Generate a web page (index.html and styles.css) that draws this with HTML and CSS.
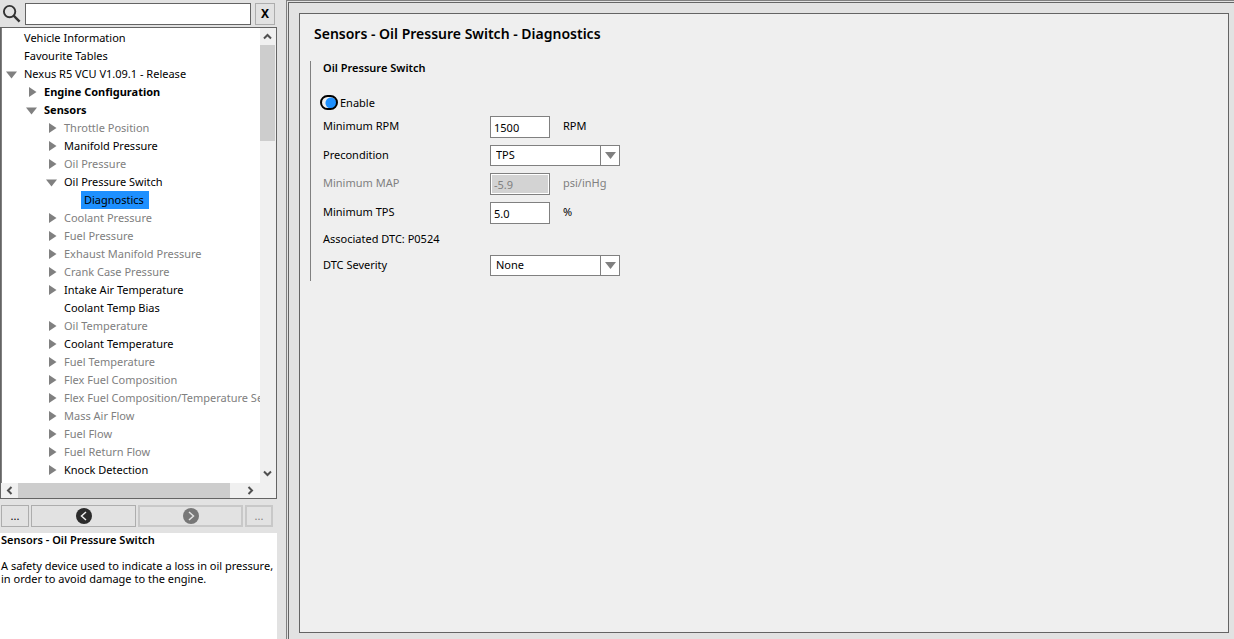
FILE: index.html
```html
<!DOCTYPE html>
<html lang="en">
<head>
<meta charset="utf-8">
<title>Sensors - Oil Pressure Switch - Diagnostics</title>
<link rel="stylesheet" href="styles.css">
</head>
<body>
<svg class="defs" aria-hidden="true">
  <symbol id="closed" viewBox="0 0 12 12"><path d="M3 1L10.500 6L3 11Z" fill="#808080"/></symbol>
  <symbol id="open" viewBox="0 0 12 12"><path d="M0 3.500H11L5.500 10.500Z" fill="#808080"/></symbol>
</svg>
<div class="app">
  <aside class="sidebar">
    <form class="search">
      <svg class="search-icon" viewBox="0 0 20 20" aria-hidden="true"><circle cx="8" cy="8" r="6" fill="none" stroke="#333" stroke-width="2"/><path d="M12 12L18.500 18.500" stroke="#333" stroke-width="2.500"/></svg>
      <input class="search-input" type="text" aria-label="Search">
      <button class="clear" type="button">X</button>
    </form>
    <div class="tree-frame">
      <nav class="tree">
        <ul class="branch">
          <li><div class="row"><span class="toggle"></span><span class="item">Vehicle Information</span></div></li>
          <li><div class="row"><span class="toggle"></span><span class="item">Favourite Tables</span></div></li>
          <li><div class="row"><svg class="toggle"><use href="#open"/></svg><span class="item">Nexus R5 VCU V1.09.1 - Release</span></div>
            <ul class="branch nested">
              <li><div class="row"><svg class="toggle"><use href="#closed"/></svg><span class="item strong">Engine Configuration</span></div></li>
              <li><div class="row"><svg class="toggle"><use href="#open"/></svg><span class="item strong">Sensors</span></div>
                <ul class="branch nested">
                  <li><div class="row"><svg class="toggle"><use href="#closed"/></svg><span class="item off">Throttle Position</span></div></li>
                  <li><div class="row"><svg class="toggle"><use href="#closed"/></svg><span class="item">Manifold Pressure</span></div></li>
                  <li><div class="row"><svg class="toggle"><use href="#closed"/></svg><span class="item off">Oil Pressure</span></div></li>
                  <li><div class="row"><svg class="toggle"><use href="#open"/></svg><span class="item">Oil Pressure Switch</span></div>
                    <ul class="branch nested">
                      <li><div class="row"><span class="toggle"></span><span class="item selected">Diagnostics</span></div></li>
                    </ul>
                  </li>
                  <li><div class="row"><svg class="toggle"><use href="#closed"/></svg><span class="item off">Coolant Pressure</span></div></li>
                  <li><div class="row"><svg class="toggle"><use href="#closed"/></svg><span class="item off">Fuel Pressure</span></div></li>
                  <li><div class="row"><svg class="toggle"><use href="#closed"/></svg><span class="item off">Exhaust Manifold Pressure</span></div></li>
                  <li><div class="row"><svg class="toggle"><use href="#closed"/></svg><span class="item off">Crank Case Pressure</span></div></li>
                  <li><div class="row"><svg class="toggle"><use href="#closed"/></svg><span class="item">Intake Air Temperature</span></div></li>
                  <li><div class="row"><span class="toggle"></span><span class="item">Coolant Temp Bias</span></div></li>
                  <li><div class="row"><svg class="toggle"><use href="#closed"/></svg><span class="item off">Oil Temperature</span></div></li>
                  <li><div class="row"><svg class="toggle"><use href="#closed"/></svg><span class="item">Coolant Temperature</span></div></li>
                  <li><div class="row"><svg class="toggle"><use href="#closed"/></svg><span class="item off">Fuel Temperature</span></div></li>
                  <li><div class="row"><svg class="toggle"><use href="#closed"/></svg><span class="item off">Flex Fuel Composition</span></div></li>
                  <li><div class="row"><svg class="toggle"><use href="#closed"/></svg><span class="item off">Flex Fuel Composition/Temperature Sensor</span></div></li>
                  <li><div class="row"><svg class="toggle"><use href="#closed"/></svg><span class="item off">Mass Air Flow</span></div></li>
                  <li><div class="row"><svg class="toggle"><use href="#closed"/></svg><span class="item off">Fuel Flow</span></div></li>
                  <li><div class="row"><svg class="toggle"><use href="#closed"/></svg><span class="item off">Fuel Return Flow</span></div></li>
                  <li><div class="row"><svg class="toggle"><use href="#closed"/></svg><span class="item">Knock Detection</span></div></li>
                </ul>
              </li>
            </ul>
          </li>
        </ul>
      </nav>
      <div class="vbar">
        <svg class="arrow" viewBox="0 0 16 16" aria-hidden="true"><path d="M4 10L7.500 6.500L11 10" /></svg>
        <div class="vtrack"><div class="vthumb"></div></div>
        <svg class="arrow" viewBox="0 0 16 16" aria-hidden="true"><path d="M4 5L7.500 8.500L11 5"/></svg>
      </div>
      <div class="hbar">
        <svg class="arrow" viewBox="0 0 16 16" aria-hidden="true"><path d="M10 4L6.500 7.500L10 11"/></svg>
        <div class="htrack"><div class="hthumb"></div></div>
        <svg class="arrow" viewBox="0 0 16 16" aria-hidden="true"><path d="M5 4L8.500 7.500L5 11"/></svg>
      </div>
    </div>
    <div class="history">
      <button class="nav-button small" type="button">...</button>
      <button class="nav-button" type="button" aria-label="Back"><svg class="disc" viewBox="0 0 16 16"><circle cx="8" cy="8" r="8" fill="#2b2b2b"/><path d="M10 4L5.500 8L10 12" fill="none" stroke="#eee" stroke-width="1.500"/></svg></button>
      <button class="nav-button" type="button" aria-label="Forward" disabled><svg class="disc" viewBox="0 0 16 16"><circle cx="8" cy="8" r="8" fill="#777"/><path d="M6 4L10.500 8L6 12" fill="none" stroke="#e2e2e2" stroke-width="1.500"/></svg></button>
      <button class="nav-button small" type="button" disabled>...</button>
    </div>
    <section class="help">
      <h2 class="help-title">Sensors - Oil Pressure Switch</h2>
      <p class="help-text">A safety device used to indicate a loss in oil pressure, in order to avoid damage to the engine.</p>
    </section>
  </aside>
  <main class="workspace">
    <div class="workspace-inner">
      <div class="panel">
        <h1 class="title">Sensors - Oil Pressure Switch - Diagnostics</h1>
        <section class="group">
          <h2 class="group-title">Oil Pressure Switch</h2>
          <label class="enable"><input class="switch" type="checkbox" checked>Enable</label>
          <div class="field"><label for="rpm">Minimum RPM</label><input class="number" id="rpm" type="text" value="1500"><span>RPM</span></div>
          <div class="field"><label for="pre">Precondition</label>
            <div class="combo"><select class="select" id="pre"><option>TPS</option><option>MAP</option></select><svg class="combo-arrow" viewBox="0 0 18 19" aria-hidden="true"><path d="M4 6H15L9.500 13Z" fill="#808080"/></svg></div></div>
          <div class="field inactive"><label for="map">Minimum MAP</label><input class="number" id="map" type="text" value="-5.9" disabled><span>psi/inHg</span></div>
          <div class="field"><label for="tps">Minimum TPS</label><input class="number" id="tps" type="text" value="5.0"><span>%</span></div>
          <p class="note">Associated DTC: P0524</p>
          <div class="field"><label for="sev">DTC Severity</label>
            <div class="combo"><select class="select" id="sev"><option>None</option></select><svg class="combo-arrow" viewBox="0 0 18 19" aria-hidden="true"><path d="M4 6H15L9.500 13Z" fill="#808080"/></svg></div></div>
        </section>
      </div>
    </div>
  </main>
</div>
</body>
</html>
```
FILE: styles.css
```css
* { box-sizing: border-box; }
body { margin: 0; background: #e2e2e2; color: #000; font: 11px/16px "Noto Sans", "Open Sans", sans-serif; }
h1, h2, p, ul { margin: 0; padding: 0; }
button, input, select { font: inherit; color: inherit; margin: 0; border-radius: 0; }
.defs { display: none; }
.app { display: flex; height: 100vh; }

.sidebar { display: flex; flex-direction: column; flex: none; width: 277px; }
.search { display: flex; align-items: center; gap: 4px; height: 27px; padding: 0 2px; }
.search-icon { width: 19px; height: 19px; }
.search-input { flex: 1; min-width: 0; height: 22px; padding: 0 4px; background: #fff; border: 1px solid #646464; }
.clear { width: 20px; height: 22px; padding: 0; background: #e2e2e2; border: 1px solid #adadad; font-weight: bold; font-size: 12px; }

.tree-frame { display: grid; flex: 1; min-height: 0; grid-template: minmax(0, 1fr) 15px / minmax(0, 1fr) 16px; background: #f0f0f0; border: 1px solid #646464; }
.tree { overflow: hidden; padding-top: 1px; background: #fff; border-left: 1px solid #808080; line-height: 18px; }
.branch { list-style: none; }
.nested { padding-left: 20px; }
.row { display: flex; align-items: center; height: 18px; white-space: nowrap; }
.toggle { flex: none; width: 12px; height: 12px; margin: 0 3px 0 4px; }
.item { padding: 0 3px; }
.strong { font-weight: 700; }
.off { color: #808080; }
.selected { padding-right: 5px; background: #1e90ff; }
.vbar { display: flex; flex-direction: column; }
.vbar .arrow { height: 17px; }
.hbar .arrow { width: 17px; }
.vtrack { flex: 1; }
.vthumb { width: 15px; height: 96px; background: #cdcdcd; }
.hbar { display: flex; grid-column: 1; }
.htrack { flex: 1; }
.hthumb { width: 212px; height: 15px; background: #cdcdcd; }
.arrow { flex: none; width: 16px; height: 16px; fill: none; stroke: #505050; stroke-width: 2; }

.history { display: flex; gap: 2px; padding: 6px 4px 6px 1px; }
.nav-button { display: flex; flex: 1 1 28px; align-items: center; justify-content: center; height: 22px; padding: 0; background: #e2e2e2; border: 1px solid #adadad; }
.nav-button:disabled { border: 2px solid #c8c8c8; color: #808080; }
.small { flex: none; width: 28px; }
.disc { width: 16px; height: 16px; }
.help { height: 106px; padding: 0 1px; background: #fff; line-height: 13px; }
.help-title { margin-bottom: 13px; font-size: 11px; font-weight: 600; }

.workspace { flex: 1; min-width: 0; margin-left: 9px; padding: 1px 0 0 1px; border: solid #808080; border-width: 1px 0 0 1px; }
.workspace-inner { height: 100%; padding: 10px 5px 6px 10px; border: solid #646464; border-width: 1px 0 0 1px; }
.panel { height: 100%; padding: 10px; background: #efefef; border: 1px solid #646464; }
.title { padding-left: 4px; font-size: 14px; line-height: 20px; font-weight: 600; }
.group { display: grid; gap: 7px; margin-top: 17px; padding-bottom: 5px; border-left: 1px solid #808080; }
.group-title { margin-bottom: 14px; padding-left: 12px; font-size: 11px; line-height: 14px; font-weight: 600; }
.enable { display: flex; align-items: center; gap: 2px; height: 13px; padding-left: 9px; }
.switch { appearance: none; width: 18px; height: 15px; border: 2px solid #000; border-radius: 8px; background: radial-gradient(circle at 9px 6px, #1e90ff 5px, #efefef 6px); }
.field { display: grid; grid-template-columns: 167px 60px 1fr; align-items: center; padding-left: 12px; }
.field label, .field span { padding-bottom: 2px; }
.field span { padding-left: 13px; }
.number { width: 60px; height: 22px; padding: 0 3px; background: #fff; border: 1px solid #808080; }
.number:disabled { background: #d3d3d3; border-color: #808080; box-shadow: inset 0 0 0 1px #fff; color: #808080; }
.inactive { color: #808080; }
.combo { position: relative; width: 130px; height: 21px; }
.select { appearance: none; width: 100%; height: 100%; padding: 0 20px 2px 5px; background: #fff; border: 1px solid #808080; }
.combo-arrow { position: absolute; top: 1px; right: 1px; width: 19px; height: 19px; border-left: 1px solid #808080; pointer-events: none; }
.note { height: 17px; padding-left: 12px; }
```
